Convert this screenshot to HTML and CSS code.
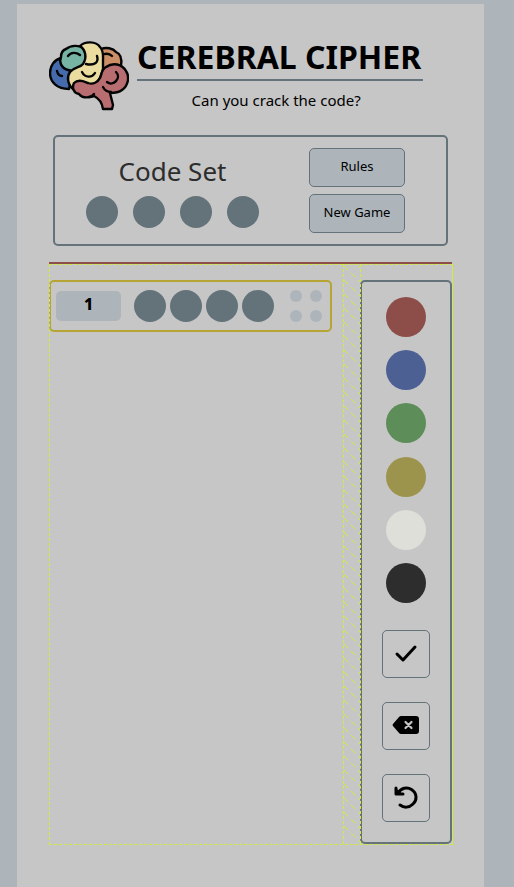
FILE: index.html
```html
<!DOCTYPE html>
<html lang="en">
<head>
<meta charset="utf-8">
<meta name="viewport" content="width=device-width, initial-scale=1">
<title>Cerebral Cipher</title>
<link rel="stylesheet" href="styles.css">
</head>
<body>
<main class="game">
  <header class="masthead">
    <svg class="brain" viewBox="0 0 80 72" aria-hidden="true">
      <g stroke="#050505" stroke-width="2.4" stroke-linecap="round" stroke-linejoin="round">
        <path fill="#466bad" d="M12 18C5 20 1 26 1 33C1 42 8 49 20 49L24 30Z"/>
        <path fill="#cb8e67" d="M52 9C57 7 64 8 67 12C72 14 73 20 72 26L54 33Z"/>
        <path fill="#77b4a4" d="M17 9C22 5 30 5 34 8C38 14 38 24 33 29C28 32 22 31 19 30C12 28 10 22 12 17C12 13 14 10 17 9Z"/>
        <path fill="#ebdda0" d="M31 6C36 1 47 1 51 7C55 11 54 16 54 21V29C52 36 51 40 46 44C40 48 30 47 24 49C18 44 18 36 21 32C25 27 31 28 34 24C38 18 37 10 31 6Z"/>
        <path fill="#b86e70" d="M57 27C64 22 73 24 77 31C81 37 79 46 73 50C69 53 65 53 61 53L64 65L63 69L54 69C53 62 49 58 45 56C39 58 33 58 30 54C24 53 23 47 25 43C30 38 36 42 39 43C44 45 49 42 51 38C53 34 52 30 57 27Z"/>
        <g fill="none">
          <path d="M19 16C22 12 27 12 31 15M56 14C60 13 62 15 63 16M48 16C50 22 46 26 37 24M33 32C36 38 43 38 46 33M8 31C9 35 11 36 13 36M67 32C73 38 64 47 58 42M54 47C56 51 58 52 62 52M45 54C43 57 41 57 40 57"/>
        </g>
      </g>
    </svg>
    <div class="heading">
      <h1>CEREBRAL CIPHER</h1>
      <p>Can you crack the code?</p>
    </div>
  </header>

  <section class="control">
    <div class="secret">
      <h2>Code Set</h2>
      <div class="code"><i class="peg"></i><i class="peg"></i><i class="peg"></i><i class="peg"></i></div>
    </div>
    <div class="actions">
      <button type="button">Rules</button>
      <button type="button">New Game</button>
    </div>
  </section>

  <section class="board">
    <div class="guesses">
      <div class="guess">
        <span class="number">1</span>
        <div class="pegs"><i class="peg"></i><i class="peg"></i><i class="peg"></i><i class="peg"></i></div>
        <div class="hints"><i></i><i></i><i></i><i></i></div>
      </div>
    </div>
    <div class="palette">
      <div class="colors">
        <button type="button" class="red" aria-label="Red"></button>
        <button type="button" class="blue" aria-label="Blue"></button>
        <button type="button" class="green" aria-label="Green"></button>
        <button type="button" class="yellow" aria-label="Yellow"></button>
        <button type="button" class="white" aria-label="White"></button>
        <button type="button" class="black" aria-label="Black"></button>
      </div>
      <button type="button" class="tool" aria-label="Submit">
        <svg viewBox="0 0 28 28"><path d="M5 15L11 21L23 8" fill="none" stroke="#000" stroke-width="3" stroke-linecap="round" stroke-linejoin="round"/></svg>
      </button>
      <button type="button" class="tool" aria-label="Delete">
        <svg viewBox="0 0 28 28"><path d="M9 5H24Q27 5 27 8V20Q27 23 24 23H9Q8 23 7 22L1 15Q0 14 1 13L7 6Q8 5 9 5Z"/><path d="M13.500 11L19.500 17M19.500 11L13.500 17" stroke="#c6c6c6" stroke-width="2.2" stroke-linecap="round"/></svg>
      </button>
      <button type="button" class="tool" aria-label="Undo">
        <svg viewBox="0 0 28 28"><path d="M4 5V11H11M6 10C9 5 15 3.500 19.500 6.500C25 10 25.500 17 21 21C17 25 12 25 8 22" fill="none" stroke="#000" stroke-width="3" stroke-linecap="round" stroke-linejoin="round"/><path d="M4 5L11 12H4Z"/></svg>
      </button>
    </div>
    <div class="gutter">
      <svg aria-hidden="true">
        <path fill="none" stroke="#d2ec3d" stroke-dasharray="6 4" d="M0 -12l18 18m-18 -4l18 18m-18 -4l18 18m-18 -4l18 18m-18 -4l18 18m-18 -4l18 18m-18 -4l18 18m-18 -4l18 18m-18 -4l18 18m-18 -4l18 18m-18 -4l18 18m-18 -4l18 18m-18 -4l18 18m-18 -4l18 18m-18 -4l18 18m-18 -4l18 18m-18 -4l18 18m-18 -4l18 18m-18 -4l18 18m-18 -4l18 18m-18 -4l18 18m-18 -4l18 18m-18 -4l18 18m-18 -4l18 18m-18 -4l18 18m-18 -4l18 18m-18 -4l18 18m-18 -4l18 18m-18 -4l18 18m-18 -4l18 18m-18 -4l18 18m-18 -4l18 18m-18 -4l18 18m-18 -4l18 18m-18 -4l18 18m-18 -4l18 18m-18 -4l18 18m-18 -4l18 18m-18 -4l18 18m-18 -4l18 18m-18 -4l18 18m-18 -4l18 18"/>
      </svg>
    </div>
    <div class="outline"></div>
  </section>
</main>
</body>
</html>
```
FILE: styles.css
```css
* { box-sizing: border-box; }

body {
  margin: 0;
  padding: 4px 30px 0 17px;
  min-height: 100vh;
  display: flex;
  background: #adb5bb;
  color: #000;
  font-family: "Noto Sans", "Open Sans", sans-serif;
}

h1, h2, p { margin: 0; }

button {
  font: inherit;
  color: inherit;
  padding: 0;
}

.game {
  flex: 1;
  padding: 36px 32px 42px;
  background: #c6c6c6;
}

.masthead {
  display: flex;
  gap: 8px;
}

.brain {
  width: 80px;
  height: 72px;
}

.heading { text-align: center; }

h1 {
  height: 41px;
  padding-right: 2px;
  border-bottom: 2px solid #64727a;
  font-size: 32px;
  line-height: 34px;
  font-weight: 700;
  white-space: nowrap;
}

.heading p {
  margin-top: 7px;
  padding-right: 8px;
  font-size: 15px;
  line-height: 24px;
}

.control {
  display: grid;
  grid-template-columns: 235px 1fr;
  margin: 23px 4px 16px;
  padding: 11px 0;
  border: 2px solid #64727a;
  border-radius: 5px;
}

.secret {
  display: flex;
  flex-direction: column;
  align-items: center;
}

h2 {
  height: 48px;
  font-size: 26px;
  line-height: 46px;
  font-weight: 400;
  color: #2d2d2d;
}

.code {
  display: flex;
  gap: 15px;
}

.peg {
  width: 32px;
  height: 32px;
  border-radius: 50%;
  background: #64727a;
}

.actions {
  display: grid;
  gap: 7px;
  justify-content: center;
  padding-right: 22px;
}

.actions button {
  width: 96px;
  height: 39px;
  border: 1px solid #64727a;
  border-radius: 5px;
  background: #adb5bb;
  font-size: 13px;
  padding-bottom: 3px;
}

.board {
  position: relative;
  display: grid;
  grid-template-columns: 1fr 92px;
  column-gap: 17px;
  border-top: 2px solid #8d4e49;
  padding-top: 16px;
}

.guess {
  display: grid;
  grid-template-columns: 65px 1fr 32px;
  align-items: center;
  column-gap: 13px;
  width: 283px;
  height: 52px;
  padding: 0 8px 0 5px;
  border: 2px solid #b6a535;
  border-radius: 5px;
}

.number {
  height: 30px;
  border-radius: 5px;
  background: #adb5bb;
  text-align: center;
  font-size: 16px;
  line-height: 26px;
  font-weight: 800;
}

.pegs {
  display: flex;
  gap: 4px;
}

.hints {
  display: grid;
  grid-template-columns: 12px 12px;
  gap: 8px;
}

.hints i {
  height: 12px;
  border-radius: 50%;
  background: #adb5bb;
}

.palette {
  display: flex;
  flex-direction: column;
  align-items: center;
  gap: 24px;
  padding: 15px 0 20px;
  border: 2px solid #64727a;
  border-radius: 5px;
}

.colors {
  display: grid;
  align-content: space-between;
  height: 306px;
  margin-bottom: 3px;
}

.colors button {
  width: 40px;
  height: 40px;
  border: 0;
  border-radius: 50%;
}

.red { background: #8d4e49; }
.blue { background: #4d6094; }
.green { background: #5d8d59; }
.yellow { background: #9c944d; }
.white { background: #dfdfd9; }
.black { background: #2d2d2d; }

.tool {
  display: grid;
  place-items: center;
  width: 48px;
  height: 48px;
  padding-bottom: 2px;
  border: 1px solid #64727a;
  border-radius: 5px;
  background: none;
}

.tool svg {
  width: 28px;
  height: 28px;
}

.gutter {
  position: absolute;
  top: 0;
  right: 91px;
  width: 18px;
  height: 100%;
  overflow: hidden;
  border: 1px dashed #d2ec3d;
  border-width: 0 1px;
}

.gutter svg {
  display: block;
  width: 100%;
  height: 100%;
}

.outline {
  position: absolute;
  inset: 0 -1px -1px 0;
  border: 1px dashed #d2ec3d;
  border-right-style: solid;
  pointer-events: none;
}
```
